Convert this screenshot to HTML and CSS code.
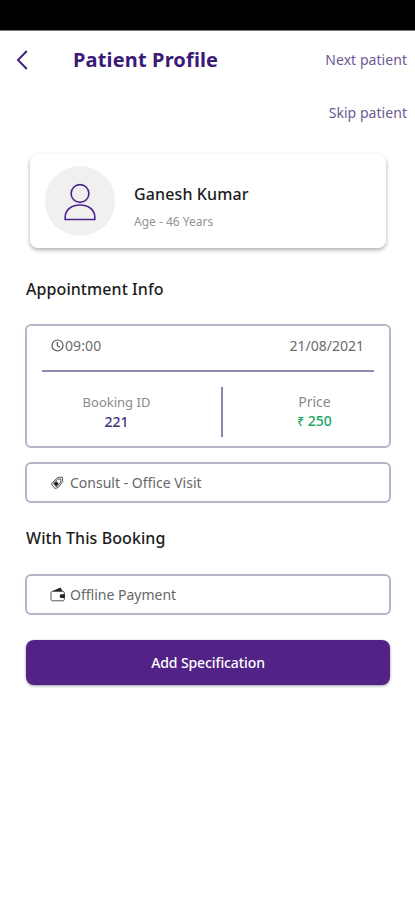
FILE: index.html
```html
<!DOCTYPE html>
<html lang="en">
<head>
<meta charset="utf-8">
<meta name="viewport" content="width=device-width, initial-scale=1">
<title>Patient Profile</title>
<link rel="stylesheet" href="styles.css">
</head>
<body>
<div class="status-bar"></div>
<header class="header">
  <svg class="back" viewBox="0 0 12 20"><path d="M10.800 1 2 10l8.800 9"/></svg>
  <h1 class="title">Patient Profile</h1>
  <nav class="actions"><a class="next">Next patient</a><a class="skip">Skip patient</a></nav>
</header>
<main class="content">
  <section class="patient">
    <div class="avatar">
      <svg viewBox="0 0 32 38"><circle cx="16" cy="10.500" r="8.900"/><path d="M1.200 36.500V34C1.200 18 30.800 18 30.800 34v2.500z"/></svg>
    </div>
    <div class="person">
      <div class="name">Ganesh Kumar</div>
      <div class="age">Age - 46 Years</div>
    </div>
  </section>
  <h2 class="heading">Appointment Info</h2>
  <section class="box info">
    <div class="when">
      <div class="time"><svg class="clock" viewBox="0 0 13 13"><circle cx="6.500" cy="6.500" r="5.500"/><path d="M6.300 3v3.700l2.700 1.500"/></svg><span>09:00</span></div>
      <span class="date">21/08/2021</span>
    </div>
    <div class="facts">
      <div class="fact"><div class="label booking">Booking ID</div><div class="value">221</div></div>
      <div class="fact price"><div class="label">Price</div><div class="value green"><span class="rupee">₹</span> 250</div></div>
    </div>
  </section>
  <section class="box row">
    <svg class="tag" viewBox="0 0 14 14"><path class="line" d="M7.500 1.500 12.300 1l.5 4.500-4.600 6-3.300 1-3.600-4.500z"/><path class="line" d="M10.800 3v3.200L6.500 11 3.300 7.300l4.200-4z"/><path class="fill" d="m6.500 5.200 2.200 2.600-2.500 2.400-2.400-2.700z"/></svg>
    <span class="consult">Consult - Office Visit</span>
  </section>
  <h2 class="heading booking-heading">With This Booking</h2>
  <section class="box row">
    <svg class="wallet" viewBox="0 0 16 15"><path class="fill" d="M2 4.300 10.500.400 12.600 4.300z"/><rect class="line" x="1" y="4.400" width="13.300" height="9.400" rx="1.500"/><path class="fill" d="M14.800 7.200h-3.300a1.900 1.900 0 0 0 0 3.800h3.300z"/></svg>
    <span class="payment">Offline Payment</span>
  </section>
  <button class="submit">Add Specification</button>
</main>
</body>
</html>
```

FILE: styles.css
```css
* { box-sizing: border-box; }
body { margin: 0; background: #fff; color: #1c1c1c; font-family: "Noto Sans", sans-serif; height: 900px; overflow: hidden; }
h1, h2 { margin: 0; }
svg { display: block; fill: none; flex: none; }
.status-bar { height: 31px; background: #000; border-bottom: 1px solid #777; }
.header { display: flex; align-items: flex-start; height: 123px; padding: 0 8px 0 16px; }
.back { width: 12px; height: 20px; margin-top: 19px; stroke: #42207d; stroke-width: 2; }
.title { margin: 15px 0 0 45px; font-size: 20px; line-height: 28px; font-weight: 700; letter-spacing: .15px; color: #3c1a78; white-space: nowrap; }
.actions { display: flex; flex-direction: column; align-items: flex-end; gap: 33px; margin: 19px 0 0 auto; font-size: 14px; line-height: 20px; letter-spacing: .05px; color: #6c5a94; white-space: nowrap; }
.content { padding: 0 25px; }
.patient { display: flex; align-items: center; height: 94px; margin: 0 4px 0 5px; padding-left: 15px; border-radius: 8px; box-shadow: 0 2px 4px rgba(0,0,0,.32); }
.avatar { display: grid; place-items: center; width: 70px; height: 70px; margin-right: 19px; border-radius: 50%; background: #f0f0f0; }
.avatar svg { width: 32px; height: 38px; margin-top: 1px; stroke: #4c2588; stroke-width: 1.6; }
.person { padding-top: 10px; }
.name { font-size: 16px; line-height: 24px; font-weight: 500; letter-spacing: .12px; }
.age { margin-top: 7px; font-size: 12px; line-height: 18px; color: #939393; }
.heading { margin-top: 29px; padding-left: 1px; font-size: 16px; line-height: 24px; font-weight: 500; letter-spacing: .07px; }
.box { border: 2px solid #b9b4cb; border-radius: 6px; }
.info { width: 366px; height: 124px; margin-top: 23px; padding: 0 15px; }
.when { display: flex; justify-content: space-between; align-items: center; height: 46px; padding: 0 10px 5px 9px; border-bottom: 2px solid #9287b2; font-size: 14px; line-height: 20px; color: #6b6b6b; }
.time { display: flex; align-items: center; letter-spacing: .1px; }
.clock { width: 13px; height: 13px; margin-right: 1px; stroke: #555; stroke-width: 1.2; }
.facts { display: flex; padding-top: 15px; }
.fact { width: 181px; height: 50px; padding: 6px 30px 0 0; text-align: center; font-size: 14px; line-height: 19px; color: #8a8a8a; }
.fact:first-child { border-right: 2px solid #8d85a8; }
.booking { font-size: 13px; }
.price { width: 151px; padding: 5px 0 0 32px; }
.value { color: #433080; font-weight: 500; }
.green { color: #18a863; }
.rupee { font-size: 12px; }
.row { display: flex; align-items: center; width: 366px; height: 41px; margin-top: 14px; padding-left: 23px; font-size: 14px; line-height: 20px; color: #686868; }
.tag { width: 14px; height: 14px; margin-right: 6px; }
.wallet { width: 16px; height: 15px; margin-right: 4px; }
.line { stroke: #555; stroke-width: 1; }
.fill { fill: #222; }
.booking-heading { margin-top: 23px; }
.booking-heading + .row { margin-top: 24px; }
.submit { display: block; width: 364px; height: 45px; margin: 25px 0 0 1px; padding: 0; border: 0; border-radius: 8px; background: #532287; color: #fff; font: 500 14px/20px "Noto Sans", sans-serif; letter-spacing: -.1px; box-shadow: 0 1px 3px rgba(0,0,0,.4); }
```
